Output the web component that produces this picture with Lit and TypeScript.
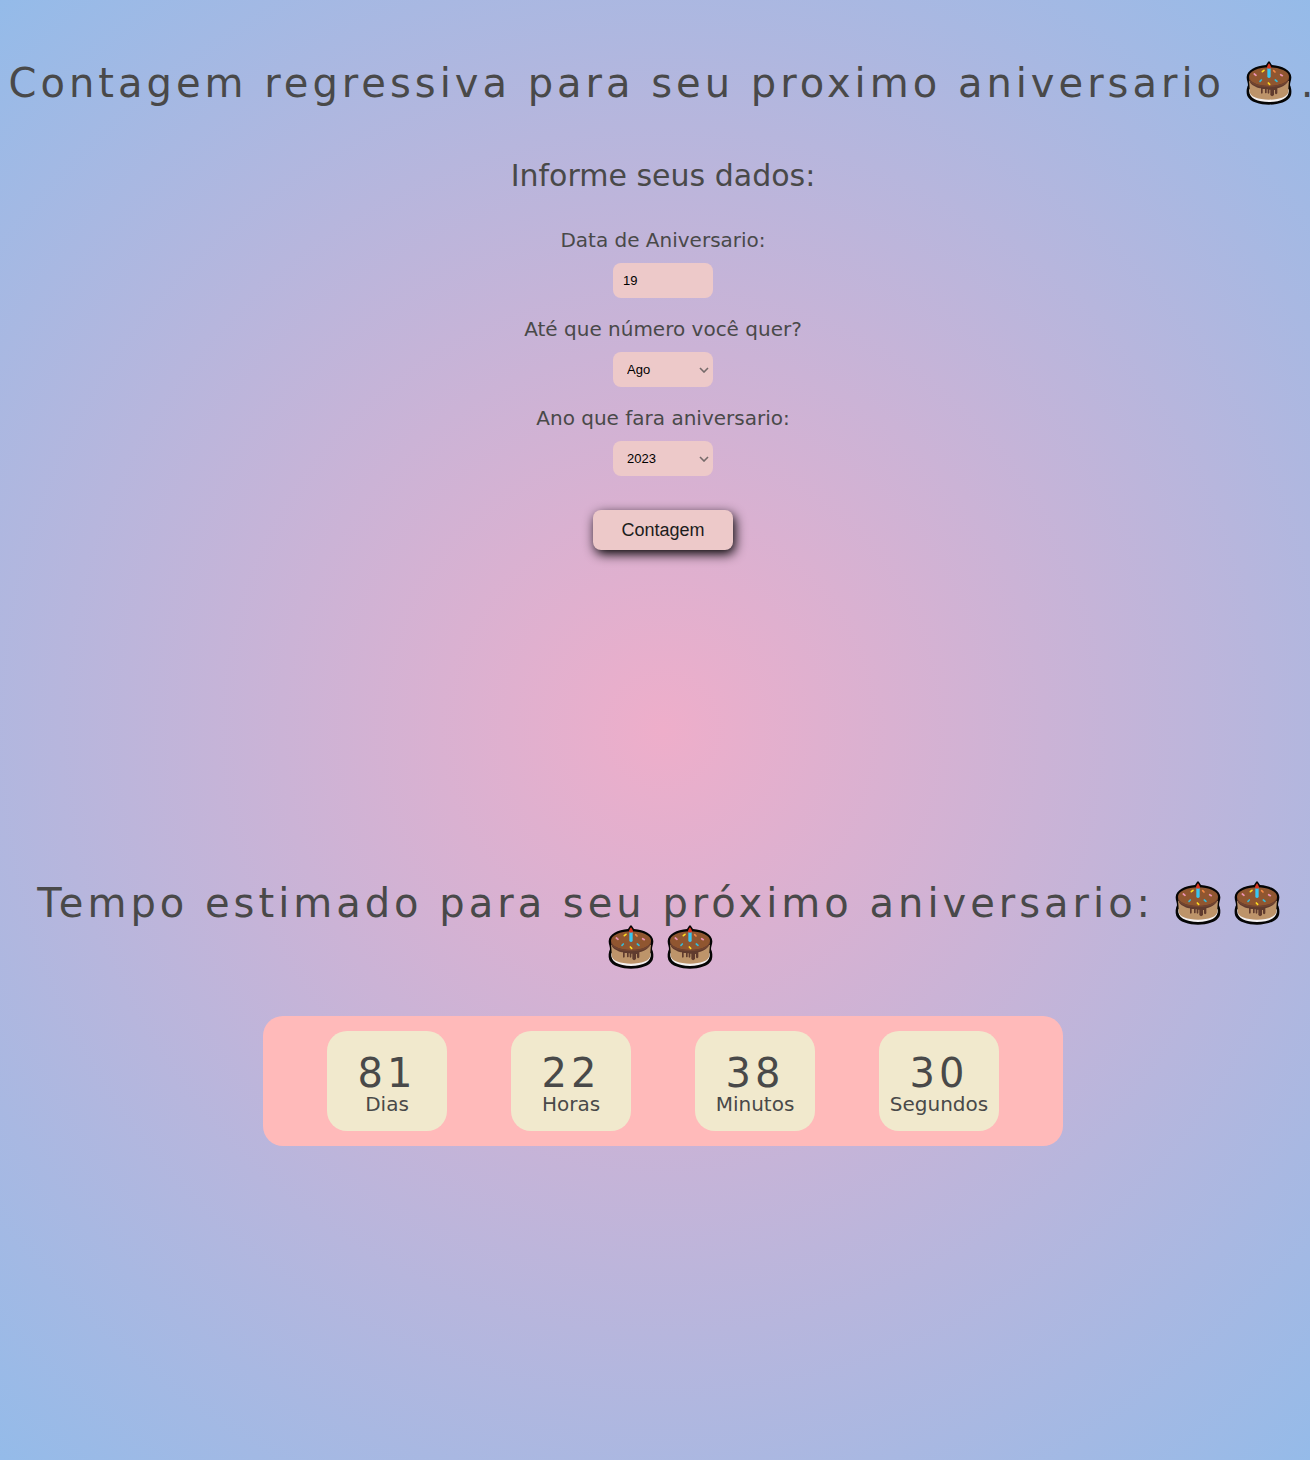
import { LitElement, html, css } from "lit";
import { customElement, state } from "lit/decorators.js";

const MONTHS = ["Jan", "Fev", "Mar", "Abr", "Mai", "Jun", "Jul", "Ago", "Set", "Out", "Nov", "Dez"];
const YEARS = ["2023", "2024", "2025", "2026"];

@customElement("cake-icon")
class CakeIcon extends LitElement {
  static styles = css`
    :host {
      display: inline-block;
      padding: 0 9px 0 4px;
      line-height: 0;
      vertical-align: -8px;
    }
    svg {
      width: 46px;
      height: 44px;
    }
  `;

  render() {
    return html`
      <svg viewBox="50 35 138 132" aria-hidden="true">
        <path d="M119 36 C115 37 114 43 110 47 C80 49 52 62 52 84 C52 94 56 99 56 108 C52 116 50 129 54 140 C62 158 92 166 119 166 C146 166 176 158 184 140 C188 129 186 116 182 108 C182 99 186 94 186 84 C186 62 158 49 128 47 C124 43 123 37 119 36Z" fill="#050505"/>
        <path d="M60 120 C56 145 82 158 119 158 C156 158 182 145 178 120Z" fill="#f4f1f1"/>
        <path d="M59 95 C60 105 61 112 61 126 C61 143 88 151 119 151 C150 151 177 143 177 126 C177 112 178 105 179 95Z" fill="#bd946a"/>
        <path d="M59 82 C59 93 61 98 65 103 C76 113 88 116 95 117 V131 Q97 136 100 131 V119 H107 V130 Q109 134 112 130 V120 H115 V131 Q117 135 120 131 V121 H123 V137 Q128 144 134 137 V122 H137 V132 Q140 138 144 132 V117 C160 113 179 104 179 82Z" fill="#603b2e"/>
        <ellipse cx="119" cy="82" rx="60" ry="28" fill="#905630"/>
        <path d="M59 83 C62 119 176 119 179 83 C179 95 176 98 168 104 C145 117 93 117 70 104 C62 98 59 94 59 83Z" fill="#724531"/>
        <g fill="none" stroke-width="5" stroke-linecap="round">
          <path d="M99 67 l5-4 M117 101 l4 4" stroke="#ffdc21"/>
          <path d="M133 64 l4 4" stroke="#f58a45"/>
          <path d="M75 74 l5 4 M154 76 l5 3" stroke="#ee93b5"/>
          <path d="M92 96 l4-4 M138 92 l5 4" stroke="#38bad5"/>
        </g>
        <path d="M114 57 H124 V83 Q119 89 114 83Z" fill="#38c7f3"/>
        <path d="M119 42 C115 48 113 51 113 55 Q119 60 125 55 C125 51 123 48 119 42Z" fill="#dc351f"/>
      </svg>
    `;
  }
}

@customElement("app-root")
class AppRoot extends LitElement {
  static styles = css`
    :host {
      display: block;
      overflow: hidden;
      font-family: Verdana, "DejaVu Sans", sans-serif;
      color: #494949;
    }
    .page {
      display: flex;
      flex-direction: column;
      width: calc(100% + 16px);
      min-height: 100vh;
      background: radial-gradient(circle, #eeaeca 0%, #94bbe9 100%);
    }
    .form-area {
      display: flex;
      flex-direction: column;
      align-items: center;
      box-sizing: border-box;
      min-height: 820px;
      padding-top: 61px;
    }
    .title {
      margin: 0;
      font-size: 40px;
      font-weight: 400;
      line-height: 43px;
      letter-spacing: 4px;
      text-align: center;
      white-space: nowrap;
    }
    .estimate {
      white-space: normal;
    }
    .pair {
      white-space: nowrap;
    }
    .subtitle {
      margin: 53px 0 34px;
      font-size: 30px;
      font-weight: 400;
      line-height: 36px;
    }
    form {
      display: flex;
      flex-direction: column;
      align-items: center;
      gap: 19px;
    }
    .field {
      display: flex;
      flex-direction: column;
      align-items: center;
      gap: 11px;
      font-size: 20px;
      line-height: 24px;
    }
    .control {
      box-sizing: border-box;
      width: 100px;
      height: 35px;
      border: none;
      border-radius: 8px;
      padding: 0 10px;
      background-color: #edc9c9;
      color: #000;
      font-family: Arial, "Liberation Sans", sans-serif;
      font-size: 13px;
    }
    .choice {
      appearance: none;
      padding: 0 20px 0 14px;
      background-image: url("data:image/svg+xml,%3Csvg xmlns='http://www.w3.org/2000/svg' width='10' height='6' viewBox='0 0 10 6'%3E%3Cpath d='M1 1l4 4 4-4' fill='none' stroke='%23756a6a' stroke-width='1.6'/%3E%3C/svg%3E");
      background-repeat: no-repeat;
      background-position: right 4px center;
    }
    .submit {
      width: 140px;
      height: 40px;
      margin-top: 15px;
      border: none;
      border-radius: 8px;
      background: #edc9c9;
      color: #1c1c1c;
      font-family: Arial, "Liberation Sans", sans-serif;
      font-size: 18px;
      box-shadow: 2px 4px 12px #000;
      cursor: pointer;
    }
    .result {
      display: flex;
      flex-direction: column;
      align-items: center;
      gap: 47px;
      padding: 61px 16px 40px;
    }
    .counter {
      display: flex;
      justify-content: space-evenly;
      box-sizing: border-box;
      width: 100%;
      max-width: 800px;
      padding: 15px 0;
      border-radius: 20px;
      background: #ffbaba;
    }
    .tile {
      box-sizing: border-box;
      width: 120px;
      height: 100px;
      padding-top: 22px;
      border-radius: 20px;
      background: #f1e9cd;
      text-align: center;
    }
    .value {
      font-size: 40px;
      line-height: 40px;
      letter-spacing: 4px;
    }
    .unit {
      font-size: 20px;
      line-height: 22px;
    }
  `;

  @state() private counts = [
    { value: 81, unit: "Dias" },
    { value: 22, unit: "Horas" },
    { value: 38, unit: "Minutos" },
    { value: 30, unit: "Segundos" },
  ];

  private onSubmit(event: Event) {
    event.preventDefault();
    const field = (id: string) => (this.renderRoot.querySelector(id) as HTMLInputElement).value;
    const target = new Date(Number(field("#year")), MONTHS.indexOf(field("#month")), Number(field("#day")));
    const left = Math.max(0, Math.floor((target.getTime() - Date.now()) / 1000));
    const values = [Math.floor(left / 86400), Math.floor(left / 3600) % 24, Math.floor(left / 60) % 60, left % 60];
    this.counts = this.counts.map((count, i) => ({ ...count, value: values[i] }));
  }

  render() {
    return html`
      <main class="page">
        <section class="form-area">
          <h1 class="title">Contagem regressiva para seu proximo aniversario <cake-icon></cake-icon>.</h1>
          <h2 class="subtitle">Informe seus dados:</h2>
          <form @submit=${this.onSubmit}>
            <div class="field">
              <label for="day">Data de Aniversario:</label>
              <input class="control" id="day" type="text" inputmode="numeric" value="19" />
            </div>
            <div class="field">
              <label for="month">Até que número você quer?</label>
              <select class="control choice" id="month">
                ${MONTHS.map((m) => html`<option ?selected=${m === "Ago"}>${m}</option>`)}
              </select>
            </div>
            <div class="field">
              <label for="year">Ano que fara aniversario:</label>
              <select class="control choice" id="year">
                ${YEARS.map((y) => html`<option>${y}</option>`)}
              </select>
            </div>
            <button class="submit" type="submit">Contagem</button>
          </form>
        </section>
        <section class="result">
          <h2 class="title estimate">Tempo estimado para seu próximo aniversario: <span class="pair"><cake-icon></cake-icon><cake-icon></cake-icon></span> <span class="pair"><cake-icon></cake-icon><cake-icon></cake-icon></span></h2>
          <div class="counter">
            ${this.counts.map(
              (c) => html`<div class="tile">
                <div class="value">${c.value}</div>
                <div class="unit">${c.unit}</div>
              </div>`
            )}
          </div>
        </section>
      </main>
    `;
  }
}
